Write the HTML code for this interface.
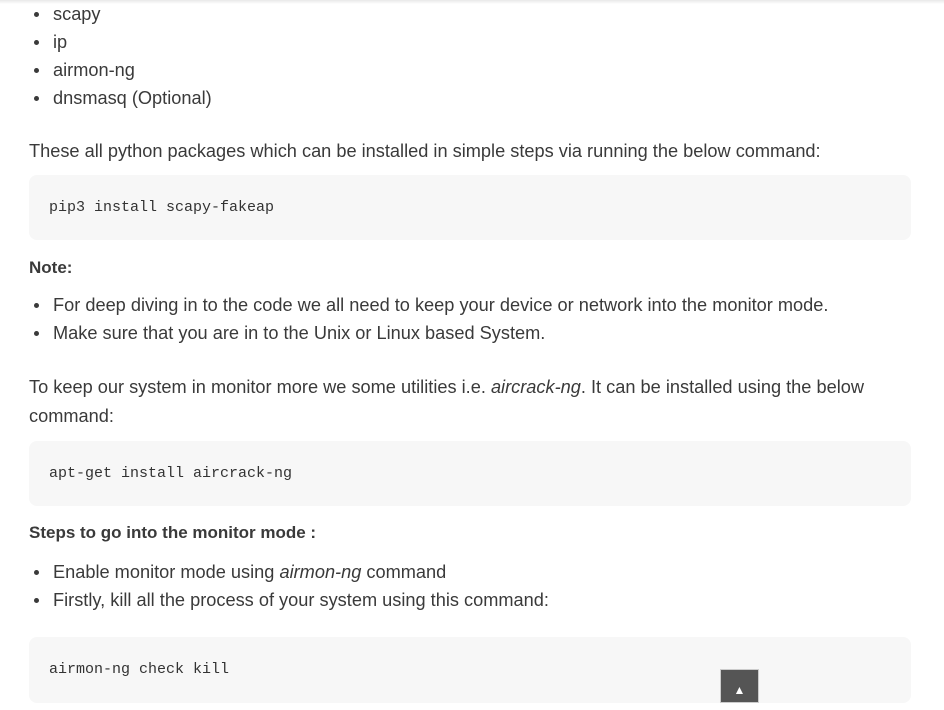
<!DOCTYPE html>
<html><head><style>
body{margin:0;width:944px;height:703px;overflow:hidden;background:#fff;font-family:"Liberation Sans",sans-serif;color:#3a3a3a;font-size:18.2px;position:relative}
.t{position:absolute;left:29px;white-space:nowrap;line-height:20px}
.li{position:absolute;left:53px;white-space:nowrap;line-height:20px}
.li:before{content:"";position:absolute;left:-19px;top:8px;width:5px;height:5px;border-radius:50%;background:#3a3a3a}
.code{position:absolute;left:29px;width:882px;background:#f7f7f7;border-radius:8px}
.code span{position:absolute;left:20px;font-family:"Liberation Mono",monospace;font-size:15px;color:#333;line-height:20px}
b{font-weight:bold;font-size:17px}
.sh{position:absolute;left:0;top:0;width:944px;height:4px;background:linear-gradient(#e8e8e8,#fff)}
</style></head><body>
<div class="sh"></div>
<div class="li" style="top:4px">scapy</div>
<div class="li" style="top:32px">ip</div>
<div class="li" style="top:60px">airmon-ng</div>
<div class="li" style="top:88px">dnsmasq (Optional)</div>
<div class="t" style="top:141px">These all python packages which can be installed in simple steps via running the below command:</div>
<div class="code" style="top:175px;height:65px"><span style="top:23px">pip3 install scapy-fakeap</span></div>
<div class="t" style="top:257px"><b>Note:</b></div>
<div class="li" style="top:295px">For deep diving in to the code we all need to keep your device or network into the monitor mode.</div>
<div class="li" style="top:323px">Make sure that you are in to the Unix or Linux based System.</div>
<div class="t" style="top:377px">To keep our system in monitor more we some utilities i.e. <i>aircrack-ng</i>. It can be installed using the below</div>
<div class="t" style="top:406px">command:</div>
<div class="code" style="top:441px;height:65px"><span style="top:23px">apt-get install aircrack-ng</span></div>
<div class="t" style="top:522px"><b>Steps to go into the monitor mode :</b></div>
<div class="li" style="top:562px">Enable monitor mode using <i>airmon-ng</i> command</div>
<div class="li" style="top:590px">Firstly, kill all the process of your system using this command:</div>
<div class="code" style="top:637px;height:66px"><span style="top:23px">airmon-ng check kill</span></div>
<div style="position:absolute;left:720px;top:669px;width:39px;height:34px;background:#555;border:1px solid #ccc;box-sizing:border-box;color:#fff;font-size:12px;text-align:center;line-height:40px">▲</div>
</body></html>
